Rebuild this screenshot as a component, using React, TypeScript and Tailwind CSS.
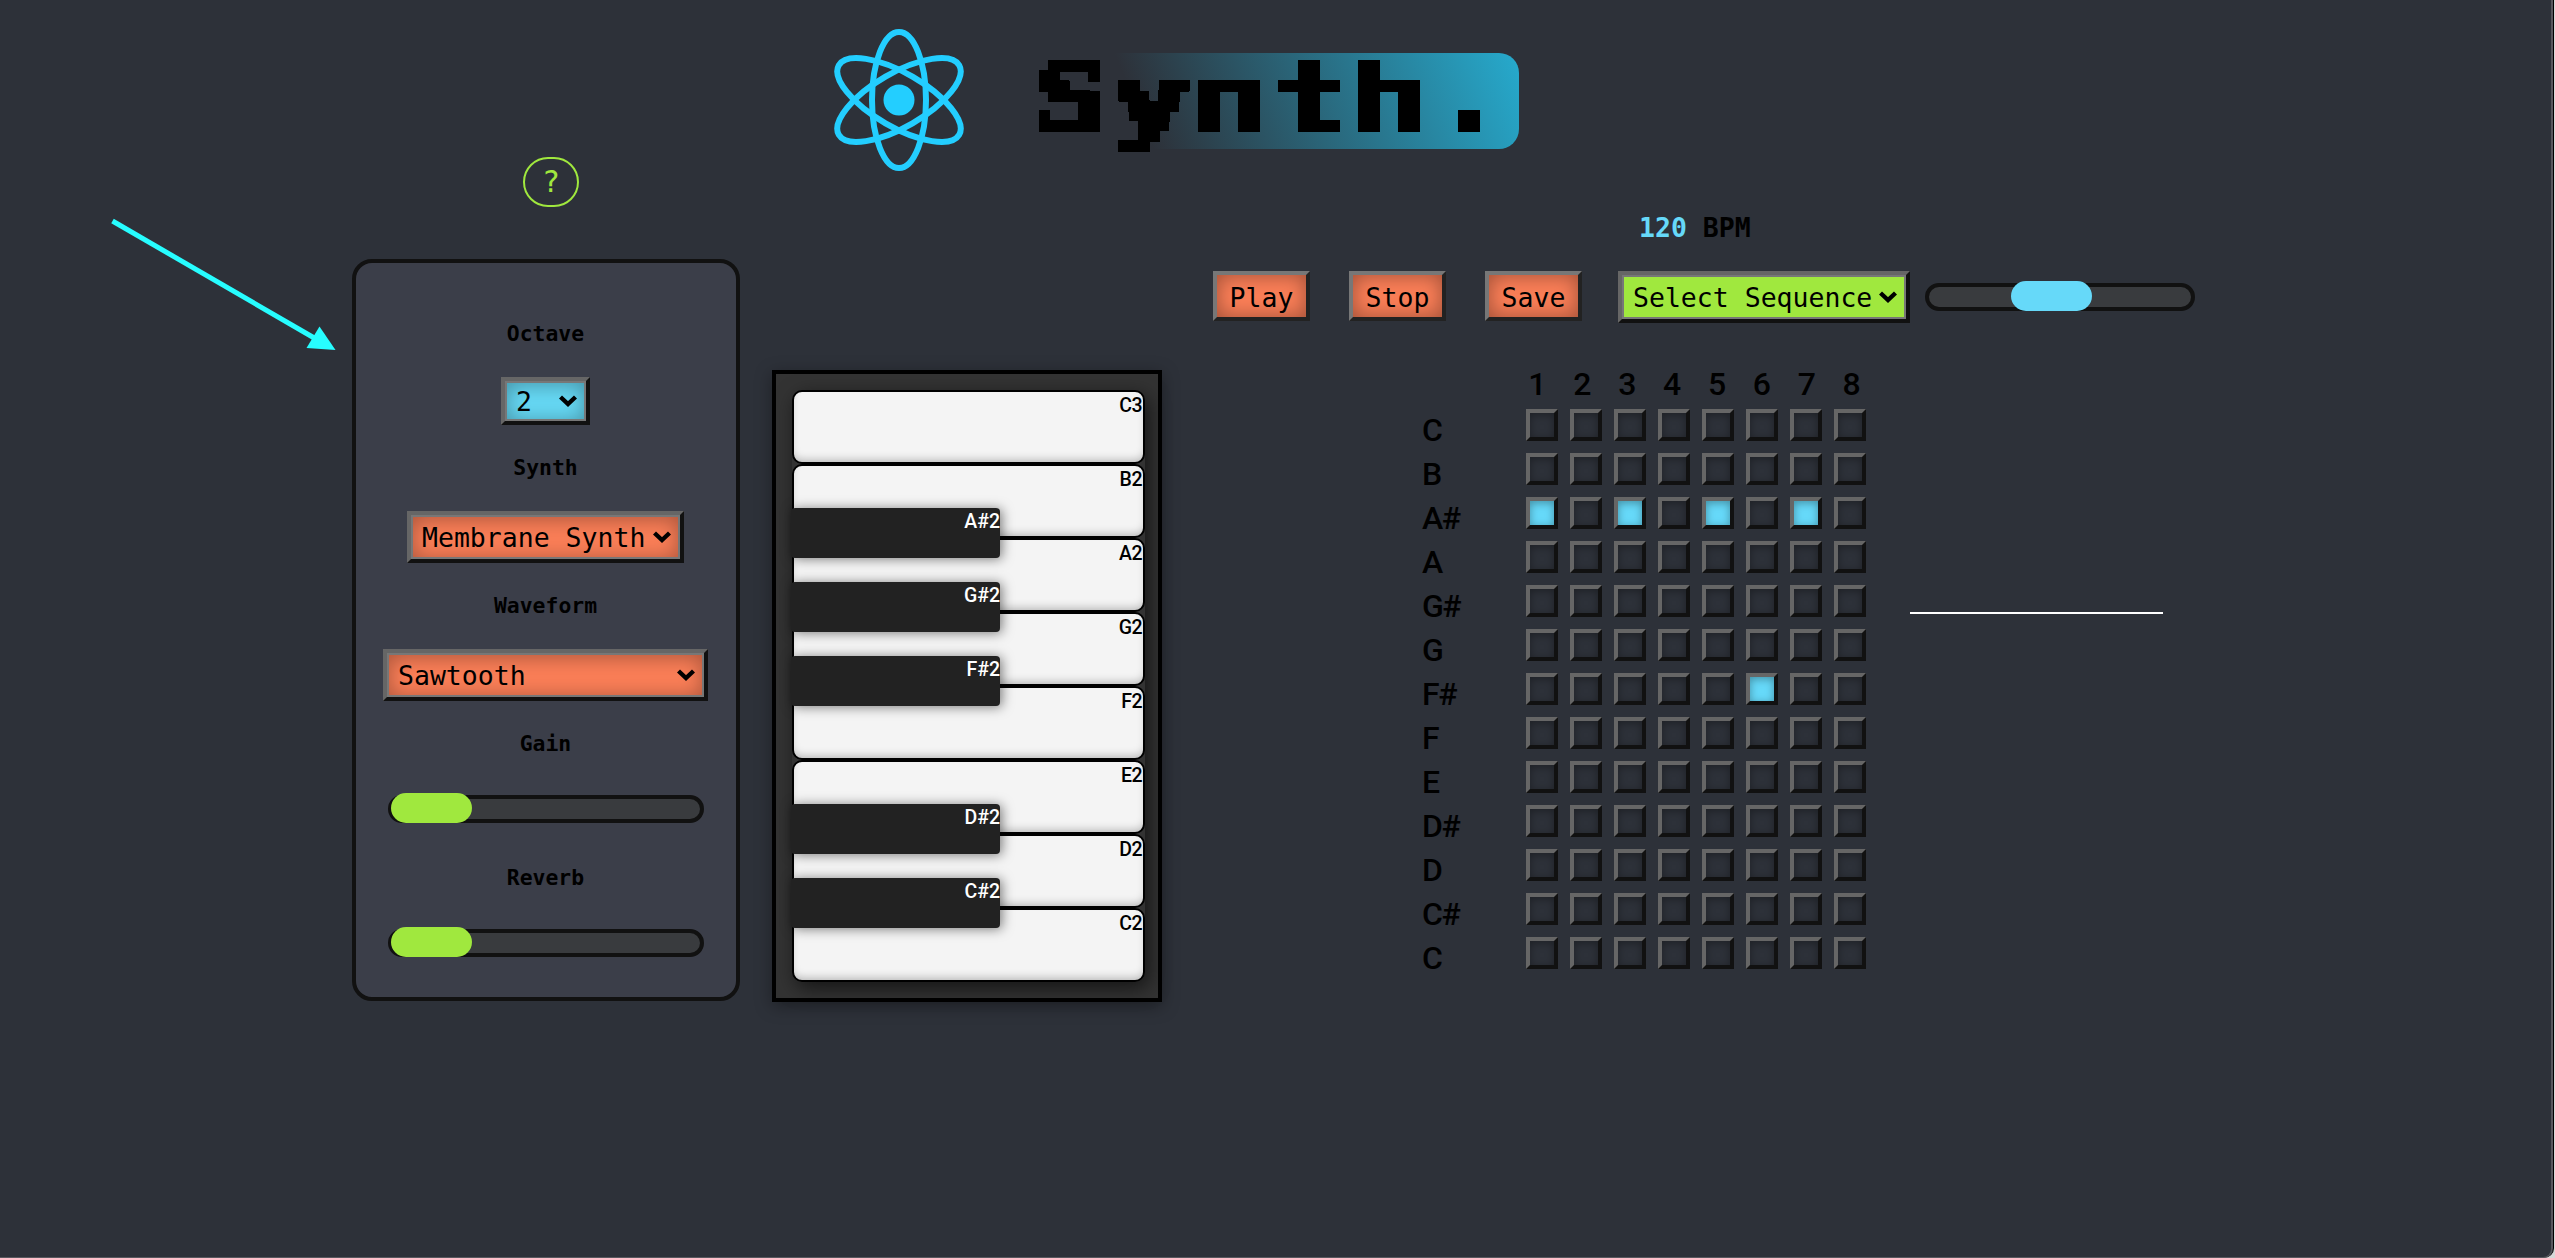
import React from "react";

const MONO = "font-['DejaVu_Sans_Mono',monospace]";
const BEVEL =
  "border-4 border-t-[#666] border-l-[#666] border-b-[#111] border-r-[#111]";

function ReactLogo() {
  return (
    <svg width="134" height="146" viewBox="-67 -73 134 146" fill="none" stroke="#23ceff" strokeWidth="6">
      <ellipse rx="27" ry="68" />
      <ellipse rx="27" ry="69.5" transform="rotate(60)" />
      <ellipse rx="27" ry="69.5" transform="rotate(-60)" />
      <circle r="15.5" fill="#23ceff" stroke="none" />
    </svg>
  );
}

function Select({ label, className, glow = true }: { label: string; className: string; glow?: boolean }) {
  return (
    <div className={`${BEVEL} shrink-0 text-black ${className}`}>
      <div
        className={`flex h-full items-center justify-between border-2 border-[#777] pr-[7px] pl-[9px] ${
          glow ? "shadow-[inset_0_2px_20px_rgba(0,0,0,0.33)]" : ""
        }`}
      >
        <span className={`${MONO} pt-[3px] text-[26.5px] leading-none whitespace-pre`}>{label}</span>
        <svg className="shrink-0" width="18" height="12" viewBox="0 0 18 12" fill="none" stroke="#000" strokeWidth="4.4">
          <path d="M1.5 2 L9 9 L16.5 2" />
        </svg>
      </div>
    </div>
  );
}

function Slider({ className, thumb }: { className: string; thumb: string }) {
  return (
    <div className={`relative h-7 shrink-0 rounded-full border-4 border-[#111] bg-[#393b3e] ${className}`}>
      <div className={`absolute -top-1.5 h-[30px] w-[81px] rounded-[15px] ${thumb}`} />
    </div>
  );
}

function Label({ children }: { children: string }) {
  return <h6 className={`${MONO} h-6 pt-px text-[21.4px] leading-6 font-bold text-black`}>{children}</h6>;
}

function Controls() {
  return (
    <section className="flex w-[388px] flex-col items-center">
      <button
        className={`${MONO} ml-[10px] h-[50px] w-14 rounded-[26px] border-2 border-[#a0e83e] text-[30px] leading-none text-[#a0e83e]`}
      >
        ?
      </button>
      <div className="mt-[52px] flex h-[742px] w-full flex-col items-center rounded-[20px] border-4 border-[#111] bg-[#3b3e49] pt-[58px] pr-px">
        <Label>Octave</Label>
        <Select label="2" className="mt-8 h-12 w-[89px] bg-[#66d9f5]" />
        <div className="h-[30px]" />
        <Label>Synth</Label>
        <Select label="Membrane Synth" className="mt-8 h-[52px] w-[277px] bg-[#fa7e57]" />
        <div className="h-[30px]" />
        <Label>Waveform</Label>
        <Select label="Sawtooth" className="mt-8 h-[52px] w-[325px] bg-[#fa7e57]" />
        <div className="h-[30px]" />
        <Label>Gain</Label>
        <Slider className="mt-10 w-[316px]" thumb="-left-px bg-[#a0e83e]" />
        <div className="h-[42px]" />
        <Label>Reverb</Label>
        <Slider className="mt-10 w-[316px]" thumb="-left-px bg-[#a0e83e]" />
      </div>
    </section>
  );
}

const KEYS: { note: string; sharp?: string }[] = [
  { note: "C3" },
  { note: "B2", sharp: "A#2" },
  { note: "A2", sharp: "G#2" },
  { note: "G2", sharp: "F#2" },
  { note: "F2" },
  { note: "E2", sharp: "D#2" },
  { note: "D2", sharp: "C#2" },
  { note: "C2" },
];

function Piano() {
  return (
    <section className="mt-[213px] ml-8 h-[632px] w-[390px] border-4 border-black bg-[#333] pt-4 pl-4 font-[Roboto,sans-serif] text-[19.5px] leading-none font-medium shadow-[0_4px_16px_rgba(0,0,0,0.35)]">
      <div className="w-[353px] rounded-[10px] shadow-[4px_6px_20px_rgba(0,0,0,0.6)]">
        {KEYS.map((k) => (
          <div
            key={k.note}
            className="relative h-[74px] rounded-[10px] border-2 border-black bg-[#f4f4f4] pt-1 pr-px text-right tracking-[-0.5px] text-black shadow-[inset_0_-5px_8px_-3px_rgba(0,0,0,0.25)]"
          >
            {k.note}
            {k.sharp && (
              <div className="absolute top-[42px] -left-[3px] z-10 h-[50px] w-[209px] rounded-[4px] bg-[#222] pt-1 text-right tracking-normal text-white shadow-[2px_1px_12px_rgba(0,0,0,0.5)]">
                {k.sharp}
              </div>
            )}
          </div>
        ))}
      </div>
    </section>
  );
}

const ROWS = ["C", "B", "A#", "A", "G#", "G", "F#", "F", "E", "D#", "D", "C#", "C"];
const STEPS = [1, 2, 3, 4, 5, 6, 7, 8];
const ACTIVE = new Set(["2-1", "2-3", "2-5", "2-7", "6-6"]);

function Sequencer() {
  return (
    <div className="mt-[43px] ml-[209px] flex font-[Roboto,sans-serif] text-[32px] font-medium text-black">
      <div className="w-[104px] pt-[42px] tracking-[-1.5px]">
        {ROWS.map((r, i) => (
          <div key={i} className="h-11 leading-[44px]">
            {r}
          </div>
        ))}
      </div>
      <div className="w-[340px]">
        <div className="-ml-[11px] flex h-[43px]">
          {STEPS.map((s) => (
            <div key={s} className="w-[44.9px] shrink-0 text-center leading-[36px]">
              {s}
            </div>
          ))}
        </div>
        {ROWS.map((_, i) => (
          <div key={i} className="flex h-11 gap-3">
            {STEPS.map((s) => (
              <div
                key={s}
                className={`${BEVEL} h-8 w-8 ${
                  ACTIVE.has(`${i}-${s}`)
                    ? "bg-[#66d9f9] shadow-[inset_0_2px_8px_rgba(0,0,0,0.35)]"
                    : "shadow-[inset_0_2px_8px_rgba(0,0,0,0.35)]"
                }`}
              />
            ))}
          </div>
        ))}
      </div>
      <div className="mt-[246px] ml-11 h-0.5 w-[253px] bg-white" />
    </div>
  );
}

function Workspace() {
  return (
    <section className="mt-[57px] ml-[51px]">
      <h5 className={`${MONO} ml-[426px] h-7 text-[26.5px] leading-7 font-bold whitespace-pre text-black`}>
        <span className="text-[#66d9f9]">120</span> BPM
      </h5>
      <div className="mt-[29px] flex h-[52px] items-start">
        {["Play", "Stop", "Save"].map((t) => (
          <button
            key={t}
            className={`${MONO} mr-[39px] h-[50px] w-[97px] border-4 border-t-[#777] border-r-[#222] border-b-[#222] border-l-[#777] bg-[#fa7e57] pt-[5px] text-[26.5px] leading-none text-black shadow-[inset_0_0_20px_rgba(0,0,0,0.38)]`}
          >
            {t}
          </button>
        ))}
        <Select label="Select Sequence" className="-ml-[3px] h-[52px] w-[292px] bg-[#a0e83e]" glow={false} />
        <Slider className="mt-3 ml-[15px] w-[270px]" thumb="left-[82px] bg-[#66d9f9]" />
      </div>
      <Sequencer />
    </section>
  );
}

export default function App() {
  return (
    <div className="relative h-[1258px] w-[2555px] overflow-hidden bg-[#d8d8d8]">
      <div className="h-[1258px] w-[2554px] overflow-hidden rounded-br-[10px] border-r border-black bg-[#57585e]">
        <div className="h-[1257px] w-[2551px] overflow-hidden rounded-br-[8px] bg-[#2d3139]">
          <header className="flex h-[157px] items-start pl-[832px]">
            <div className="pt-[27px]">
              <ReactLogo />
            </div>
            {/* The mosaic filter snaps the title's strokes to a coarse pixel grid. */}
            <svg width="0" height="0">
              <filter id="mosaic" filterUnits="userSpaceOnUse" x="0" y="0" width="480" height="100">
                <feFlood x="4" y="2" width="2" height="2" result="dot" />
                <feOffset in="dot" x="0" y="0" width="10" height="10" />
                <feTile result="grid" />
                <feComposite in="SourceGraphic" in2="grid" operator="in" />
                <feMorphology operator="dilate" radius="5" />
                <feComponentTransfer>
                  <feFuncA type="linear" slope="40" intercept="-6" />
                </feComponentTransfer>
              </filter>
            </svg>
            <div className="mt-[53px] ml-[73px] h-24 w-[480px] rounded-[20px] bg-[linear-gradient(68deg,#2d3139_22%,#26aacd_100%)]">
              <div className="h-24 w-[480px] [filter:url(#mosaic)]">
                <h1
                  className={`${MONO} h-24 w-[343px] origin-left -translate-x-2 scale-x-[1.4] text-[95px] leading-[90px] font-bold text-black`}
                >
                  Synth.
                </h1>
              </div>
            </div>
          </header>
          <main className="flex items-start pl-[352px]">
            <Controls />
            <Piano />
            <Workspace />
          </main>
        </div>
      </div>
      <svg className="absolute top-[214px] left-[106px]" width="236" height="144" viewBox="106 214 236 144">
        <path d="M112.5 221 L316 339" stroke="#27fdff" strokeWidth="5" />
        <path d="M335.5 350 L306.5 348 L319.5 326.5 Z" fill="#27fdff" />
      </svg>
    </div>
  );
}
